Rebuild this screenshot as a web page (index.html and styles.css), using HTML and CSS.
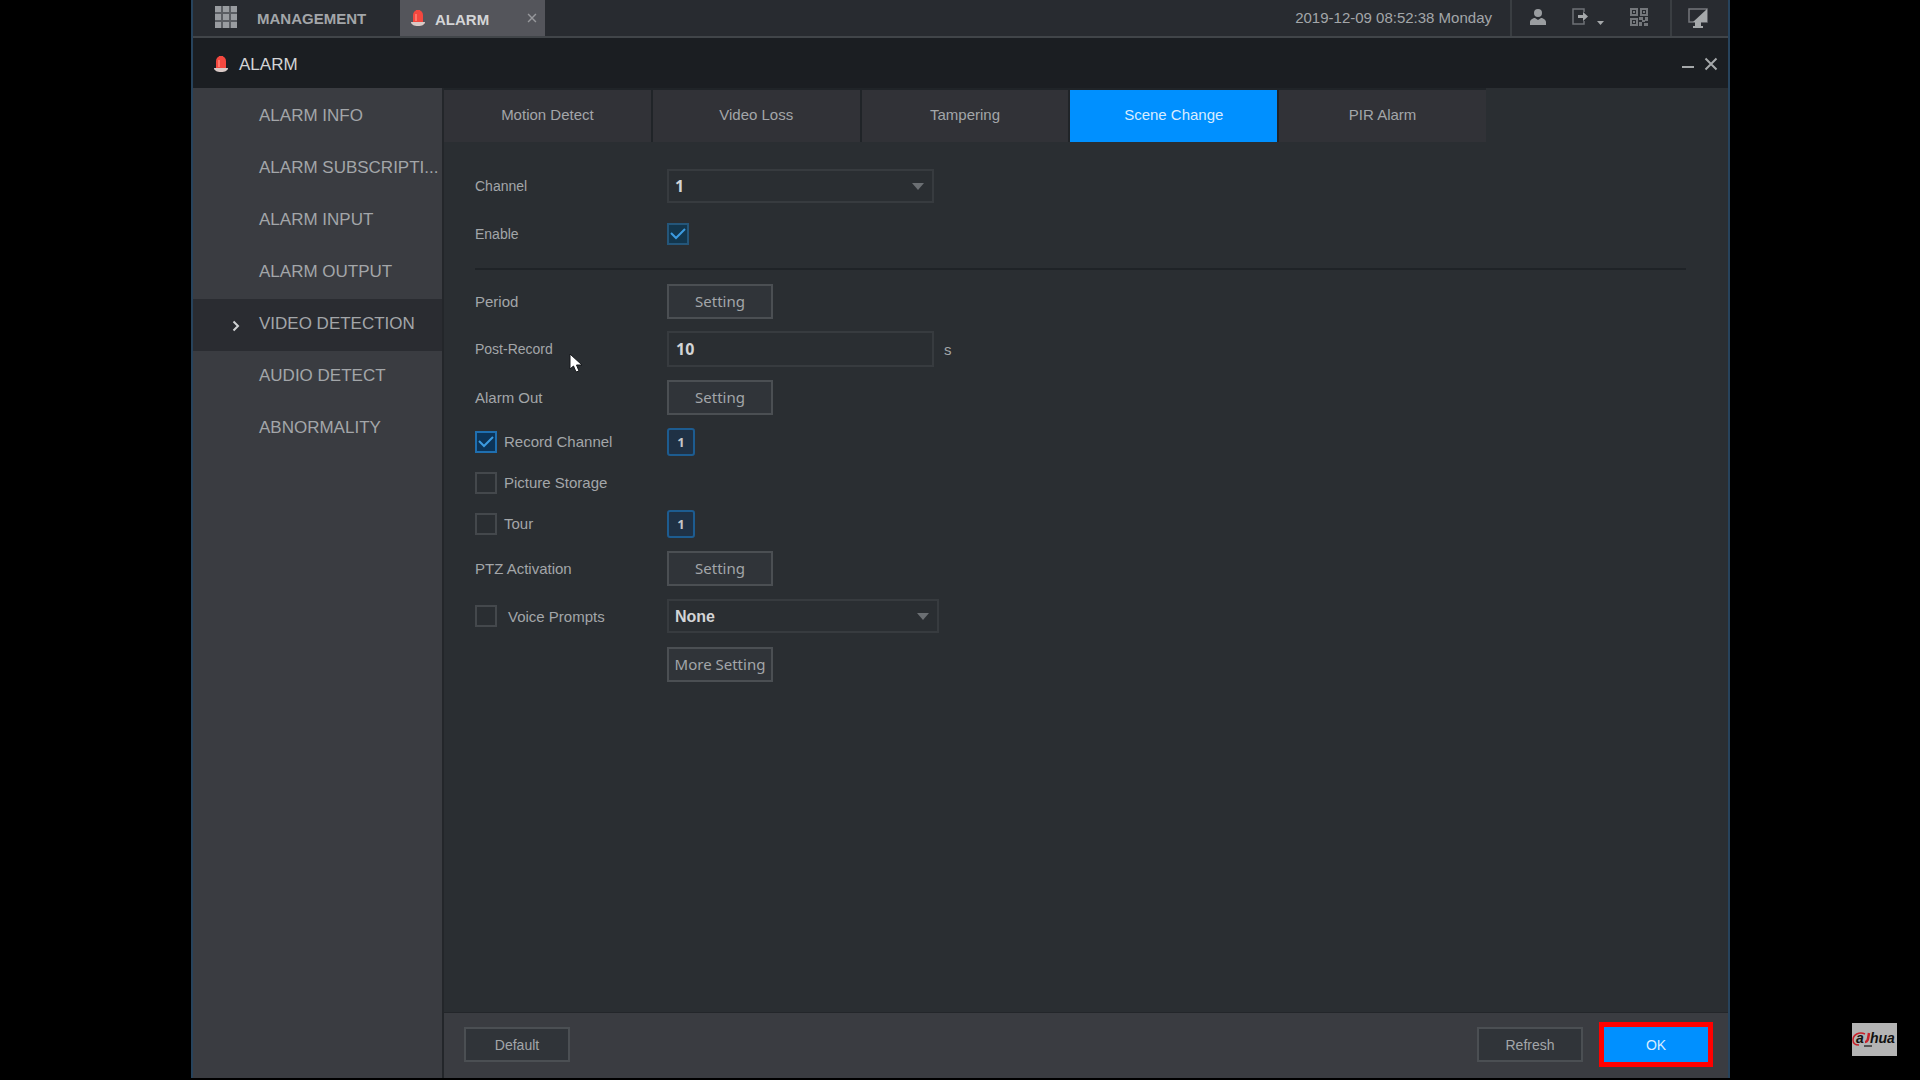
FILE: index.html
```html
<!DOCTYPE html>
<html lang="en">
  <head>
    <meta charset="UTF-8" />
    <meta name="viewport" content="width=device-width, initial-scale=1.0" />
    <title>Alarm - Video Detection</title>
    <link rel="stylesheet" href="styles.css">
  </head>
  <body>
    <!-- shared icons -->
    <svg class="defs" aria-hidden="true">
      <symbol id="siren" viewBox="0 0 16 18">
        <path d="M3 13V6a5 5 0 0 1 10 0v7z" fill="#f4483f" />
        <path d="M6 1h4v3H6z" fill="#f4483f" />
        <path d="M5 5h2v7H5z" fill="#ff7468" />
        <path d="M1 13h14c0 2.500-3 4-7 4s-7-1.500-7-4z" fill="#d9c9c6" />
      </symbol>
      <symbol id="cross" viewBox="0 0 14 14">
        <path d="M1.500 1.500l11 11M12.500 1.500l-11 11" stroke="currentColor" stroke-width="2" fill="none" />
      </symbol>
    </svg>

    <div class="screen">
      <header class="topbar">
        <button class="menu-btn">
          <svg width="22" height="22" viewBox="0 0 22 22">
            <path d="M0 0h22v22H0z" fill="#5a5d62" />
            <path d="M0 0h6v6H0zM8 0h6v6H8zM16 0h6v6h-6zM0 8h6v6H0zM8 8h6v6H8zM16 8h6v6h-6zM0 16h6v6H0zM8 16h6v6H8zM16 16h6v6h-6z" fill="#999ca0" />
          </svg>
          <span>MANAGEMENT</span>
        </button>
        <div class="page-tab">
          <svg width="16" height="18"><use href="#siren" /></svg>
          <span>ALARM</span>
          <button class="icon-btn" aria-label="Close tab"><svg width="10" height="10"><use href="#cross" /></svg></button>
        </div>
        <time class="clock">2019-12-09 08:52:38 Monday</time>
        <div class="tools">
          <button class="icon-btn" aria-label="User">
            <svg width="16" height="16" viewBox="0 0 16 16">
              <circle cx="8" cy="4" r="4" fill="#9a9da0" />
              <path d="M0 16v-3c0-2 3-4 5-4l3 2 3-2c2 0 5 2 5 4v3z" fill="#9a9da0" />
            </svg>
          </button>
          <button class="icon-btn" aria-label="Log out">
            <svg width="32" height="18" viewBox="0 0 32 18">
              <path d="M12 4V1H1v15h11v-3" stroke="#6e7175" stroke-width="1.500" fill="none" />
              <path d="M6 7h5V4l5 4.500-5 4.500v-3H6z" fill="#a5a8aa" />
              <path d="M25 13h7l-3.500 4z" fill="#a5a8aa" />
            </svg>
          </button>
          <button class="icon-btn" aria-label="QR code">
            <svg width="18" height="18" viewBox="0 0 18 18">
              <path d="M1 1h6v6H1zM11 1h6v6h-6zM1 11h6v6H1z" stroke="#74777b" stroke-width="2" fill="none" />
              <path d="M3 3h2v2H3zM13 3h2v2h-2zM3 13h2v2H3zM9 9h4v3H9zM15 9h3v4h-3zM12 12h3v2h-3zM9 14h3v4H9zM14 15h4v3h-4z" fill="#74777b" />
            </svg>
          </button>
        </div>
        <button class="icon-btn display-btn" aria-label="Display">
          <svg width="20" height="20" viewBox="0 0 20 20">
            <path d="M1 1h18v13H1z" stroke="#74777b" stroke-width="1.500" fill="none" />
            <path d="M19 1v13H5z" fill="#a5a8aa" />
            <path d="M7 14h6v4h2v2H5v-2h2z" fill="#a5a8aa" />
          </svg>
        </button>
      </header>

      <div class="titlebar">
        <svg width="16" height="18"><use href="#siren" /></svg>
        <h1>ALARM</h1>
        <button class="icon-btn" aria-label="Minimize"><svg width="12" height="14" viewBox="0 0 12 14"><path d="M0 10h12" stroke="#a5a8aa" stroke-width="2" /></svg></button>
        <button class="icon-btn" aria-label="Close"><svg width="14" height="14"><use href="#cross" /></svg></button>
      </div>

      <div class="body">
        <nav class="sidebar">
          <a href="#">ALARM INFO</a>
          <a href="#">ALARM SUBSCRIPTI...</a>
          <a href="#">ALARM INPUT</a>
          <a href="#">ALARM OUTPUT</a>
          <a href="#" class="active">
            <svg class="arrow" width="8" height="12" viewBox="0 0 8 12"><path d="M1.500 1.500L6 6l-4.500 4.500" stroke="#d0d2d4" stroke-width="2" fill="none" /></svg>
            VIDEO DETECTION
          </a>
          <a href="#">AUDIO DETECT</a>
          <a href="#">ABNORMALITY</a>
        </nav>

        <main class="content">
          <div class="tabs">
            <button>Motion Detect</button>
            <button>Video Loss</button>
            <button>Tampering</button>
            <button class="active">Scene Change</button>
            <button>PIR Alarm</button>
          </div>

          <form class="form">
            <div class="row">
              <label for="channel">Channel</label>
              <select id="channel"><option>1</option></select>
            </div>
            <div class="row">
              <label for="enable">Enable</label>
              <input type="checkbox" id="enable" class="dim" checked />
            </div>
            <hr />
            <div class="row">
              <span>Period</span>
              <button type="button" class="btn">Setting</button>
            </div>
            <div class="row">
              <label for="post">Post-Record</label>
              <input type="text" id="post" value="10" />
              <span class="unit">s</span>
            </div>
            <div class="row">
              <span>Alarm Out</span>
              <button type="button" class="btn">Setting</button>
            </div>
            <div class="row check">
              <label><input type="checkbox" checked />Record Channel</label>
              <button type="button" class="chip">1</button>
            </div>
            <div class="row check">
              <label><input type="checkbox" />Picture Storage</label>
            </div>
            <div class="row check">
              <label><input type="checkbox" />Tour</label>
              <button type="button" class="chip">1</button>
            </div>
            <div class="row">
              <span>PTZ Activation</span>
              <button type="button" class="btn">Setting</button>
            </div>
            <div class="row voice">
              <label><input type="checkbox" />Voice Prompts</label>
              <select aria-label="Voice file"><option>None</option></select>
            </div>
            <div class="row">
              <span></span>
              <button type="button" class="btn">More Setting</button>
            </div>
          </form>

          <footer class="actions">
            <button class="btn">Default</button>
            <button class="btn refresh">Refresh</button>
            <div class="highlight"><button class="btn primary">OK</button></div>
          </footer>
        </main>
      </div>
    </div>

    <!-- mouse pointer -->
    <svg class="cursor" width="14" height="20" viewBox="0 0 14 20">
      <path d="M1 1v15l3.500-3 2.500 6 3-1-2.500-6H13z" fill="#fff" stroke="#14171a" stroke-width="1" />
    </svg>

    <svg class="logo" width="45" height="33" viewBox="0 0 45 33" role="img" aria-label="alhua">
      <path d="M0 0h45v33H0z" fill="#b4b4b4" />
      <path d="M13 11C7 8 1 12 1 17c0 3 2 5 6 5" stroke="#c8202a" stroke-width="1.500" fill="none" />
      <path d="M17 10c-1 6-1 9-4 9" stroke="#c8202a" stroke-width="2.500" fill="none" />
      <text x="4" y="20" class="logo-text">a</text>
      <text x="18" y="20" class="logo-text">hua</text>
      <path d="M12 23h8" stroke="#333" stroke-width="1.500" />
    </svg>
  </body>
</html>
```
FILE: styles.css
```css
* {
  box-sizing: border-box;
}
body {
  margin: 0;
  padding: 0 190px 2px 191px;
  height: 100vh;
  background-color: #000;
  font-family: "Liberation Sans", Arial, sans-serif;
  font-size: 15px;
  color: #a3a6a9;
}
button {
  padding: 0;
  border: none;
  background: none;
  font: inherit;
  color: inherit;
}
svg {
  display: block;
  flex: none;
}
.defs {
  position: absolute;
  width: 0;
  height: 0;
}
.screen {
  display: flex;
  flex-direction: column;
  height: 100%;
  border: solid #27435c;
  border-width: 0 2px;
  background-color: #2a2e32;
}

/* top bar */
.topbar {
  display: flex;
  height: 38px;
  border-bottom: 2px solid #414549;
  background-color: #282b30;
}
.menu-btn {
  display: flex;
  align-items: center;
  gap: 20px;
  width: 207px;
  padding-left: 22px;
  padding-bottom: 2px;
  font-weight: bold;
}
.menu-btn span,
.page-tab span {
  padding-top: 3px;
}
.page-tab {
  display: flex;
  align-items: center;
  width: 145px;
  padding: 0 8px 0 10px;
  background-color: #54555b;
  color: #d3d4d6;
}
.page-tab span {
  flex: 1;
  padding-left: 9px;
  font-weight: bold;
}
.page-tab .icon-btn {
  color: #97989c;
}
.clock {
  margin-left: auto;
  padding-right: 18px;
  line-height: 36px;
}
.tools {
  display: flex;
  align-items: center;
  gap: 26px;
  width: 160px;
  padding: 0 0 3px 18px;
  border-left: 2px solid #3a3e42;
}
.display-btn {
  width: 58px;
  padding-left: 16px;
  border-left: 2px solid #3a3e42;
}

/* window title */
.titlebar {
  display: flex;
  align-items: center;
  gap: 10px;
  height: 50px;
  padding: 1px 10px 0 20px;
  background-color: #1b1e22;
  color: #a5a8aa;
}
.titlebar h1 {
  flex: 1;
  margin: 0;
  padding-top: 2px;
  color: #d3d4d6;
  font-size: 17px;
  font-weight: normal;
}

.body {
  display: flex;
  flex: 1;
}
.sidebar {
  width: 249px;
  padding-top: 3px;
  background-color: #3a3c41;
  font-size: 17px;
}
.sidebar a {
  display: block;
  position: relative;
  height: 52px;
  padding: 0 4px 4px 66px;
  line-height: 50px;
  color: #a3a6a9;
  text-decoration: none;
  white-space: nowrap;
}
.sidebar a.active {
  background-color: #2a2c31;
}
.arrow {
  position: absolute;
  left: 39px;
  top: 21px;
}

.content {
  display: flex;
  flex: 1;
  flex-direction: column;
  border-left: 2px solid #23262a;
}
.tabs {
  display: flex;
  gap: 2px;
  width: 1042px;
  padding-top: 2px;
  background-color: #202428;
}
.tabs button {
  flex: 1;
  height: 52px;
  padding-bottom: 4px;
  background-color: #313237;
}
.tabs .active {
  background-color: #0090ff;
  color: #d8ecff;
}

/* settings form */
.form {
  display: flex;
  flex: 1;
  flex-direction: column;
  gap: 12px;
  padding: 26px 42px 0 31px;
}
.row {
  display: flex;
  align-items: center;
  height: 36px;
}
.row.check {
  height: 29px;
}
.row > :first-child {
  display: flex;
  align-items: center;
  width: 192px;
}
.row > label[for] {
  font-size: 14px;
}
.form hr {
  width: 100%;
  height: 2px;
  margin: 4px 0 1px;
  border: none;
  background-color: #1f2327;
}
input[type="text"],
select {
  width: 267px;
  height: 36px;
  padding: 0 7px;
  border: 2px solid #373b3f;
  background-color: transparent;
  font: bold 16px "Noto Sans", sans-serif;
  color: #d3d4d6;
}
select {
  height: 34px;
  padding: 0 6px;
  appearance: none;
  background: url("data:image/svg+xml,%3Csvg xmlns='http://www.w3.org/2000/svg' width='12' height='7'%3E%3Cpath d='M0 0h12L6 7z' fill='%236b6f73'/%3E%3C/svg%3E") no-repeat right 8px center;
}
.unit {
  padding-left: 10px;
}
input[type="checkbox"] {
  appearance: none;
  width: 22px;
  height: 22px;
  margin: 0 7px 0 0;
  border: 2px solid #44484c;
}
input[type="checkbox"]:checked {
  border-color: #1f6fb0;
  background: #0c3458 url("data:image/svg+xml,%3Csvg xmlns='http://www.w3.org/2000/svg' width='16' height='12'%3E%3Cpath d='M1 5l5 5 9-9' stroke='%233c9be0' stroke-width='2' fill='none'/%3E%3C/svg%3E") no-repeat center;
}
input[type="checkbox"].dim:checked {
  border-color: #24567a;
  background-color: #12364d;
}
.voice select {
  width: 272px;
  font-family: "Liberation Sans", sans-serif;
}
.voice input[type="checkbox"] {
  margin-right: 11px;
}
.btn {
  width: 106px;
  height: 35px;
  border: 2px solid #4b4f53;
  background-color: #303439;
  font-family: "Noto Sans", sans-serif;
}
.chip {
  width: 28px;
  height: 28px;
  border: 2px solid #1d5c90;
  border-radius: 3px;
  background-color: #1f3145;
  color: #c4c6c8;
  font: bold 13px "Noto Sans", sans-serif;
}

.actions {
  display: flex;
  align-items: center;
  height: 66px;
  padding: 0 15px 2px 20px;
  border-top: 1px solid #23262a;
  background-color: #3a3c41;
}
.actions .btn {
  font-family: inherit;
  font-size: 14px;
}
.refresh {
  margin-left: auto;
}
.highlight {
  margin-left: 16px;
  border: 5px solid #f00;
}
.actions .primary {
  display: block;
  width: 104px;
  border: none;
  background-color: #0090ff;
  color: #d8ecff;
}

.cursor {
  position: absolute;
  left: 569px;
  top: 353px;
}
.logo {
  position: absolute;
  right: 23px;
  bottom: 24px;
}
.logo-text {
  font: italic bold 14px "Liberation Sans", sans-serif;
  fill: #111;
}
```
